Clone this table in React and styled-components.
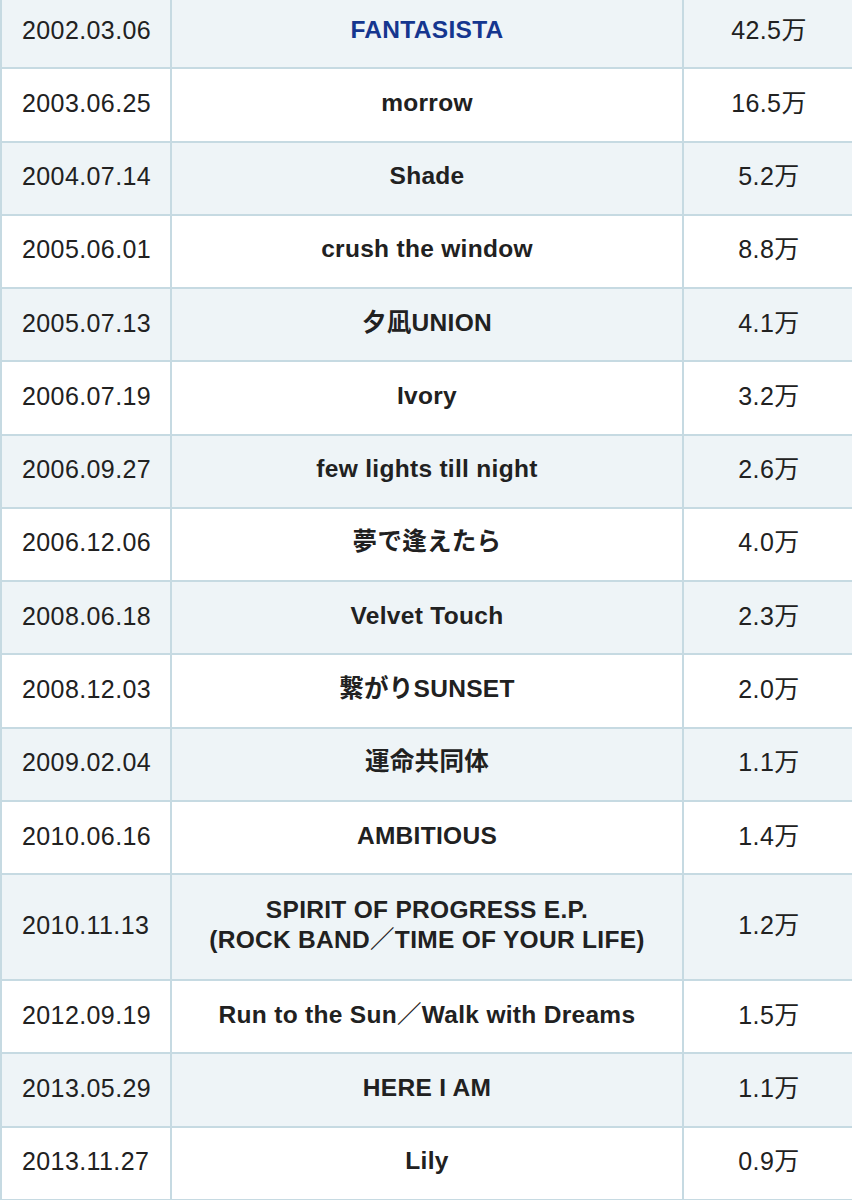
import { styled, createGlobalStyle } from "styled-components";

const GlobalStyle = createGlobalStyle`
  html, body {
    margin: 0;
    padding: 0;
    background: #ffffff;
  }
  body {
    font-family: "Liberation Sans", "Noto Sans CJK JP", sans-serif;
    color: #212121;
  }
`;

const singles = [
  { date: "2002.03.06", title: "FANTASISTA", sales: "42.5万", link: true },
  { date: "2003.06.25", title: "morrow", sales: "16.5万" },
  { date: "2004.07.14", title: "Shade", sales: "5.2万" },
  { date: "2005.06.01", title: "crush the window", sales: "8.8万" },
  { date: "2005.07.13", title: "夕凪UNION", sales: "4.1万" },
  { date: "2006.07.19", title: "Ivory", sales: "3.2万" },
  { date: "2006.09.27", title: "few lights till night", sales: "2.6万" },
  { date: "2006.12.06", title: "夢で逢えたら", sales: "4.0万" },
  { date: "2008.06.18", title: "Velvet Touch", sales: "2.3万" },
  { date: "2008.12.03", title: "繋がりSUNSET", sales: "2.0万" },
  { date: "2009.02.04", title: "運命共同体", sales: "1.1万" },
  { date: "2010.06.16", title: "AMBITIOUS", sales: "1.4万" },
  {
    date: "2010.11.13",
    title: ["SPIRIT OF PROGRESS E.P.", "(ROCK BAND／TIME OF YOUR LIFE)"],
    sales: "1.2万",
  },
  { date: "2012.09.19", title: "Run to the Sun／Walk with Dreams", sales: "1.5万" },
  { date: "2013.05.29", title: "HERE I AM", sales: "1.1万" },
  { date: "2013.11.27", title: "Lily", sales: "0.9万" },
];

const Page = styled.div`
  width: 852px;
  overflow: hidden;
`;

const Table = styled.div`
  width: 854px;
  margin-top: -4px;
  border-left: 2px solid #c6dae2;
`;

const Row = styled.div`
  display: grid;
  grid-template-columns: 170px 512px 1fr;
  min-height: 71.27px;
  border-bottom: 2px solid #c6dae2;
  background: ${(p) => (p.$shaded ? "#eef4f7" : "#ffffff")};
`;

const Cell = styled.div`
  display: flex;
  flex-direction: column;
  align-items: ${(p) => (p.$left ? "flex-start" : "center")};
  justify-content: center;
  padding: ${(p) => (p.$multi ? "20px 0 24px" : "0 0 4px")};
  padding-left: ${(p) => (p.$left ? "20px" : "0")};
  border-right: 2px solid #c6dae2;
  font-size: 25px;
  line-height: 30px;
  letter-spacing: 0.4px;
  text-align: center;
`;

const Title = styled.span`
  font-weight: 700;
  font-size: 24.5px;
  letter-spacing: 0.3px;
  color: ${(p) => (p.$link ? "#15368f" : "#212121")};
`;

export default function App() {
  return (
    <Page>
      <GlobalStyle />
      <Table>
        {singles.map((s, i) => {
          const lines = Array.isArray(s.title) ? s.title : [s.title];
          return (
            <Row key={s.date} $shaded={i % 2 === 0}>
              <Cell $left>{s.date}</Cell>
              <Cell $multi={lines.length > 1}>
                {lines.map((t) => (
                  <Title key={t} $link={s.link}>
                    {t}
                  </Title>
                ))}
              </Cell>
              <Cell>{s.sales}</Cell>
            </Row>
          );
        })}
      </Table>
    </Page>
  );
}
